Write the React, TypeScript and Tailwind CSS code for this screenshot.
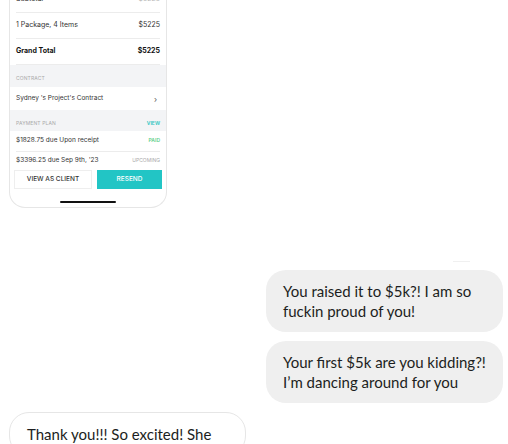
import React from "react";

// Chat screenshot: invoice phone capture + messenger bubbles.

const phoneFont = { fontFamily: "Inter, 'Liberation Sans', sans-serif" };

function Row({ left, right, bold, rightClass }: { left: string; right?: React.ReactNode; bold?: boolean; rightClass?: string }) {
  return (
    <div className="mx-[6px] flex h-[26px] items-center justify-between border-b border-[#ececec]">
      <span className={`text-[7px] ${bold ? "font-bold text-[#111]" : "text-[#333]"}`}>{left}</span>
      <span className={rightClass ?? `text-[7px] ${bold ? "font-bold text-[#111]" : "text-[#333]"}`}>{right}</span>
    </div>
  );
}

function PhoneCard() {
  return (
    <div
      className="-mt-[13px] ml-[9px] w-[158px] overflow-hidden rounded-b-[16px] border-x border-b border-[#e6e6e6] bg-white"
      style={phoneFont}
    >
      <Row left="Subtotal" right="$5225" rightClass="text-[7px] text-[#bbb]" />
      <Row left="1 Package, 4 Items" right="$5225" />
      <Row left="Grand Total" right="$5225" bold />
      <div className="flex h-[22px] items-end bg-[#f3f4f6] px-[6px] pb-[5px]">
        <span className="text-[5px] uppercase tracking-wide text-[#aaa]">Contract</span>
      </div>
      <div className="flex h-[23px] items-center justify-between px-[6px]">
        <span className="text-[6.5px] text-[#333]">Sydney 's Project's Contract</span>
        <span className="mr-[3px] text-[8px] text-[#555]">›</span>
      </div>
      <div className="flex h-[21px] items-end justify-between bg-[#f3f4f6] px-[6px] pb-[4px]">
        <span className="text-[5px] uppercase tracking-wide text-[#aaa]">Payment Plan</span>
        <span className="text-[5px] font-semibold uppercase text-[#2fc4c0]">View</span>
      </div>
      <div className="mx-[6px] flex h-[21px] items-center justify-between border-b border-[#ececec]">
        <span className="text-[6.5px] text-[#333]">$1828.75 due Upon receipt</span>
        <span className="text-[5px] font-semibold uppercase text-[#5fcf8a]">Paid</span>
      </div>
      <div className="mx-[6px] flex h-[18px] items-center justify-between">
        <span className="text-[6.5px] text-[#333]">$3396.25 due Sep 9th, '23</span>
        <span className="text-[5px] uppercase text-[#aaa]">Upcoming</span>
      </div>
      <div className="mx-[4px] flex gap-[5px]">
        <div className="flex h-[19px] w-[78px] items-center justify-center border border-[#eee] text-[6.5px] font-medium text-[#333]">
          VIEW AS CLIENT
        </div>
        <div className="flex h-[19px] flex-1 items-center justify-center bg-[#22c5c5] text-[6.5px] font-medium text-white">
          RESEND
        </div>
      </div>
      <div className="flex h-[18px] items-end justify-center pb-[4px]">
        <div className="h-[2px] w-[56px] rounded-full bg-[#111]" />
      </div>
    </div>
  );
}

const chatFont = { fontFamily: "Lato, 'Open Sans', sans-serif" };

function Bubble({ children, mine }: { children: React.ReactNode; mine?: boolean }) {
  return (
    <div
      className={`w-[237px] rounded-[20px] px-[17px] py-[11px] text-[15px] leading-[20px] text-[#1c1e21] ${
        mine ? "bg-[#efefef]" : "border border-[#e6e6e6] bg-white"
      }`}
      style={chatFont}
    >
      {children}
    </div>
  );
}

export default function App() {
  return (
    <div className="h-[444px] w-[508px] overflow-hidden bg-white">
      <PhoneCard />
      <div className="mr-[5px] mt-[53px] flex flex-col items-end">
        <div className="mr-[33px] h-px w-[17px] bg-[#f0f0f0]" />
        <div className="mt-[8px] flex flex-col gap-[9px]">
          <Bubble mine>
            You raised it to $5k?! I am so
            <br />
            fuckin proud of you!
          </Bubble>
          <Bubble mine>
            Your first $5k are you kidding?!
            <br />
            I’m dancing around for you
          </Bubble>
        </div>
      </div>
      <div className="ml-[9px] mt-[9px]">
        <Bubble>Thank you!!! So excited! She</Bubble>
      </div>
    </div>
  );
}
